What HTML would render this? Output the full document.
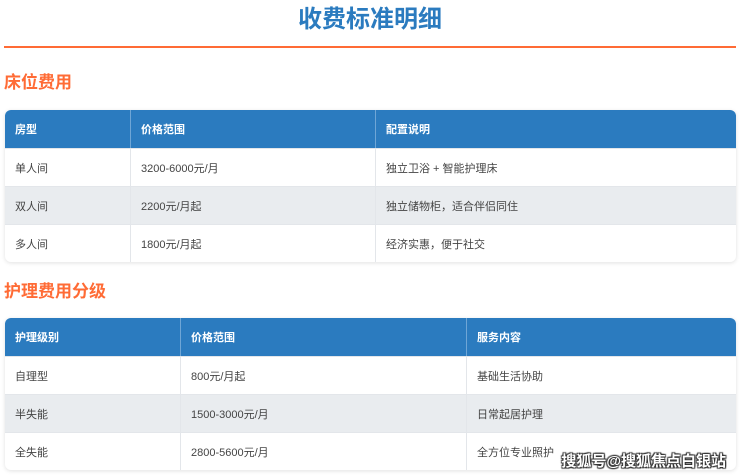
<!DOCTYPE html>
<html><head><meta charset="utf-8"><style>
*{margin:0;padding:0;box-sizing:border-box}
body{width:740px;height:476px;overflow:hidden;background:#fff;font-family:"Liberation Sans","Noto Sans CJK SC",sans-serif;position:relative}
h1{position:absolute;left:0;width:740px;top:4px;text-align:center;font-size:24px;color:#2b7bbf;font-weight:bold;line-height:32px}
.line{position:absolute;left:4px;width:732px;top:46px;height:2px;background:#ff6b35}
h2{position:absolute;left:4px;font-size:17px;color:#ff6b35;font-weight:bold;line-height:24px}
table{position:absolute;left:5px;width:731px;border-collapse:separate;border-spacing:0;border-radius:6px;overflow:hidden;box-shadow:0 1px 4px rgba(0,0,0,.12);font-size:11px;color:#444}
th{background:#2b7bbf;color:#fff;text-align:left;font-weight:bold;height:38px;padding-left:10px;border-right:1px solid #6fa6d6}
td{height:38px;padding-left:10px;border-right:1px solid #e3e6ea;border-top:1px solid #e3e6ea}
th:last-child,td:last-child{border-right:none}
tr.g td{background:#e9ecef}
.wm{position:absolute;right:14px;top:450px;font-size:15px;font-weight:bold;color:#fff;text-shadow:0 0 1px #333,1px 1px 1px #333,-1px -1px 1px #333,1px -1px 1px #333,-1px 1px 1px #333;letter-spacing:0}
</style></head><body>
<h1>收费标准明细</h1>
<div class="line"></div>
<h2 style="top:71px">床位费用</h2>
<table style="top:110px">
<tr><th style="width:126px">房型</th><th style="width:245px">价格范围</th><th>配置说明</th></tr>
<tr><td>单人间</td><td>3200-6000元/月</td><td>独立卫浴 + 智能护理床</td></tr>
<tr class="g"><td>双人间</td><td>2200元/月起</td><td>独立储物柜，适合伴侣同住</td></tr>
<tr><td>多人间</td><td>1800元/月起</td><td>经济实惠，便于社交</td></tr>
</table>
<h2 style="top:280px">护理费用分级</h2>
<table style="top:318px">
<tr><th style="width:176px">护理级别</th><th style="width:286px">价格范围</th><th>服务内容</th></tr>
<tr><td>自理型</td><td>800元/月起</td><td>基础生活协助</td></tr>
<tr class="g"><td>半失能</td><td>1500-3000元/月</td><td>日常起居护理</td></tr>
<tr><td>全失能</td><td>2800-5600元/月</td><td>全方位专业照护</td></tr>
</table>
<div class="wm">搜狐号@搜狐焦点白银站</div>
</body></html>
